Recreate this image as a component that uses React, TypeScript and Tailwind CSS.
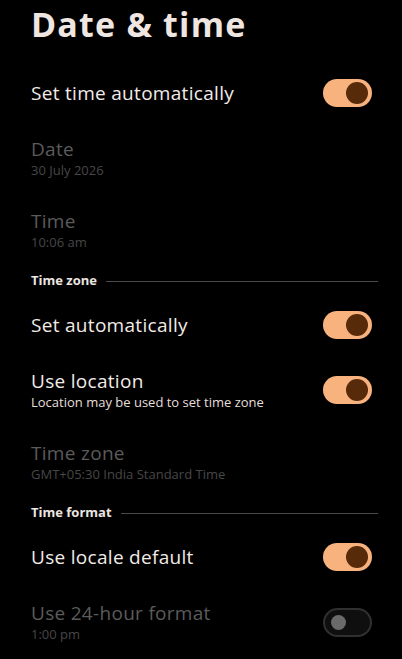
import React, { useState } from 'react';

const FONT = { fontFamily: '"Open Sans", "Noto Sans", sans-serif' };

const Toggle: React.FC<{ on: boolean; disabled?: boolean; onChange?: () => void }> = ({ on, disabled, onChange }) => {
  if (!on) {
    return (
      <button
        onClick={disabled ? undefined : onChange}
        className="w-[49px] h-[29px] rounded-full border-2 border-[#303030] bg-[#0f0f0f] flex items-center pl-[6px] shrink-0"
      >
        <span className="w-[15px] h-[15px] rounded-full bg-[#6a6a6a]" />
      </button>
    );
  }
  return (
    <button
      onClick={disabled ? undefined : onChange}
      className="w-[49px] h-[28px] rounded-full bg-[#f8b27e] flex items-center justify-end pr-[4px] shrink-0"
    >
      <span className="w-[22px] h-[22px] rounded-full bg-[#572a0a]" />
    </button>
  );
};

const SectionHeader: React.FC<{ label: string }> = ({ label }) => (
  <div className="h-[30px] flex items-center pr-[24px]">
    <span className="text-[13px] font-bold text-[#ece6e2]">{label}</span>
    <div className="flex-1 h-px bg-[#4a4a4a] ml-[9px]" />
  </div>
);

const Row: React.FC<{
  title: string;
  subtitle?: string;
  disabled?: boolean;
  toggle?: boolean;
  onToggle?: () => void;
}> = ({ title, subtitle, disabled, toggle, onToggle }) => (
  <div className={`${subtitle ? 'h-[72px]' : 'h-[58px]'} flex items-center justify-between pr-[30px]`}>
    <div className={subtitle ? 'pb-[3px]' : ''}>
      <p
        className={`text-[19px] leading-[26px] font-medium tracking-[0.3px] ${
          disabled ? 'text-[#5b5b5b]' : 'text-[#f2ebe7]'
        }`}
      >
        {title}
      </p>
      {subtitle && (
        <p className={`text-[13px] leading-[16px] ${disabled ? 'text-[#474747]' : 'text-[#e6dfdb]'}`}>{subtitle}</p>
      )}
    </div>
    {toggle !== undefined && <Toggle on={toggle} disabled={disabled} onChange={onToggle} />}
  </div>
);

export default function App() {
  const [autoTime, setAutoTime] = useState(true);
  const [autoZone, setAutoZone] = useState(true);
  const [useLocation, setUseLocation] = useState(true);
  const [localeDefault, setLocaleDefault] = useState(true);

  return (
    <div className="w-[402px] h-[659px] bg-black overflow-hidden pl-[31px]" style={FONT}>
      <div className="h-[64px]">
        <h1 className="text-[34px] leading-[48px] font-bold tracking-[1.2px] text-[#efe6e2]">Date &amp; time</h1>
      </div>

      <Row title="Set time automatically" toggle={autoTime} onToggle={() => setAutoTime(!autoTime)} />
      <Row title="Date" subtitle="30 July 2026" disabled />
      <Row title="Time" subtitle="10:06 am" disabled />

      <SectionHeader label="Time zone" />
      <Row title="Set automatically" toggle={autoZone} onToggle={() => setAutoZone(!autoZone)} />
      <Row
        title="Use location"
        subtitle="Location may be used to set time zone"
        toggle={useLocation}
        onToggle={() => setUseLocation(!useLocation)}
      />
      <Row title="Time zone" subtitle="GMT+05:30 India Standard Time" disabled />

      <SectionHeader label="Time format" />
      <Row title="Use locale default" toggle={localeDefault} onToggle={() => setLocaleDefault(!localeDefault)} />
      <Row title="Use 24-hour format" subtitle="1:00 pm" disabled toggle={false} />
    </div>
  );
}
